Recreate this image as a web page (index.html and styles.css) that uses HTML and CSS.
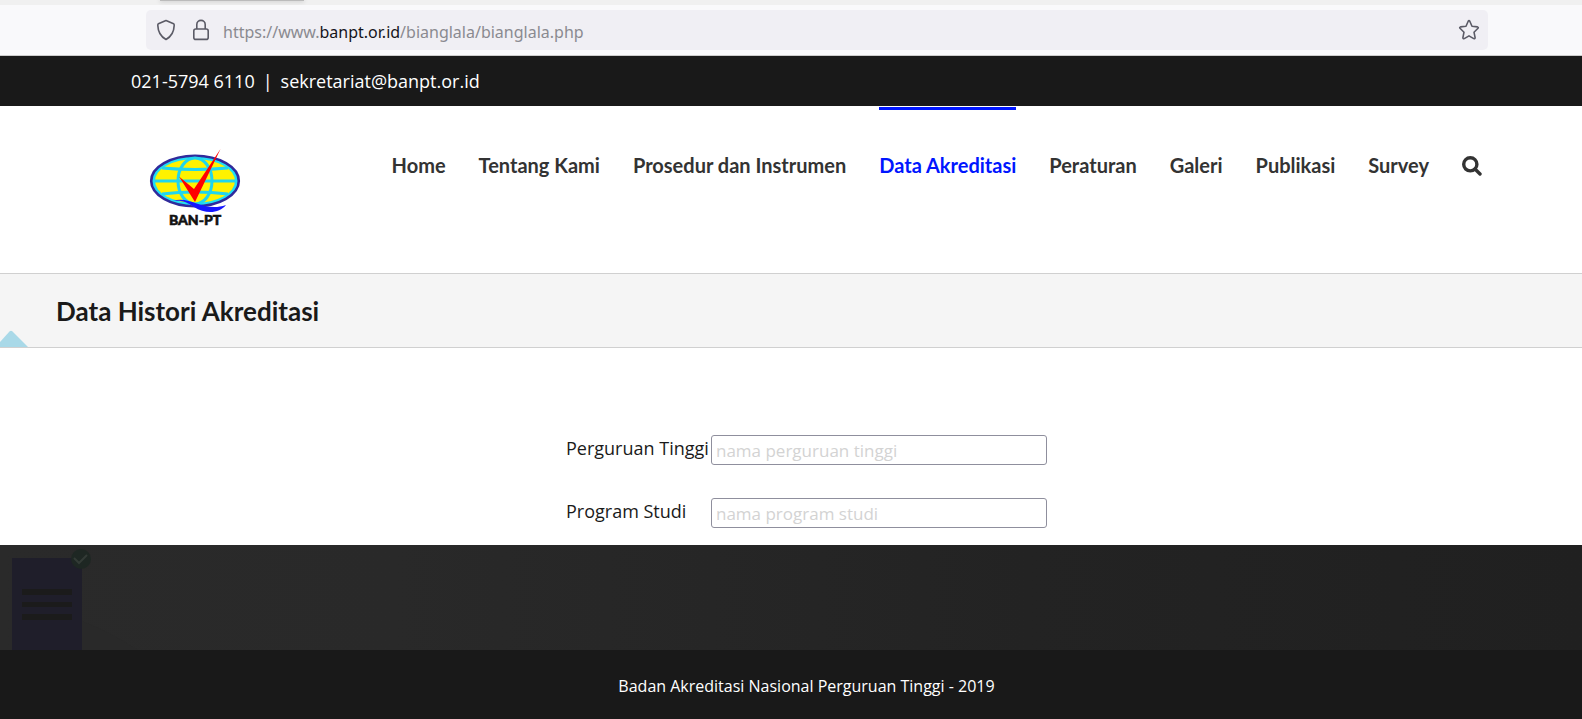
FILE: index.html
```html
<!DOCTYPE html>
<html lang="id">
<head>
<meta charset="utf-8">
<title>Data Histori Akreditasi</title>
<link rel="stylesheet" href="styles.css">
</head>
<body>
<div class="browser">
  <div class="tabs"><div class="tab"></div></div>
  <div class="toolbar">
    <div class="urlbar">
      <svg class="shield" width="20" height="22" viewBox="0 0 20 22" aria-hidden="true"><path d="M10 1.500 17.600 4.800Q18.300 5.200 18.200 6.400C18 12.500 15.500 17.500 10 20.500C4.500 17.500 2 12.500 1.800 6.400Q1.700 5.200 2.400 4.800Z"/></svg>
      <svg class="lock" width="18" height="22" viewBox="0 0 18 22" aria-hidden="true"><rect x="1.800" y="10" width="14.400" height="10.400" rx="2"/><path d="M4.800 10V5.600a4.200 4.200 0 0 1 8.400 0V10"/></svg>
      <span class="url">https://www.<b>banpt.or.id</b>/bianglala/bianglala.php</span>
      <button class="star" type="button" aria-label="Bookmark"><svg width="22" height="22" viewBox="0 0 22 22" aria-hidden="true"><path d="M10.200 2.200Q11 1 11.800 2.200L14 7.200 19.500 7.900Q20.800 8.300 20 9.300L16 13.200 17.100 18.600Q17 20 15.700 19.600L11 16.900 6.300 19.600Q5 20 4.900 18.600L6 13.200 2 9.300Q1.200 8.300 2.500 7.900L8 7.200Z"/></svg></button>
    </div>
  </div>
</div>
<div class="contact"><span>021-5794 6110</span><span>|</span><span>sekretariat@banpt.or.id</span></div>
<header class="header">
  <a class="logo" href="#" aria-label="BAN-PT">
    <svg width="92" height="80" viewBox="0 0 92 80">
      <ellipse cx="46" cy="33" rx="43.800" ry="25.200" fill="#20dff5" stroke="#302a9b" stroke-width="2.600"/>
      <ellipse cx="46" cy="33" rx="40" ry="22" fill="#fff200"/>
      <g fill="none" stroke="#20d5ee" stroke-width="3"><ellipse cx="46" cy="33" rx="17" ry="23"/><path d="M13 20Q46 23 79 20M6 33H86M13 46Q46 42 79 46"/></g>
      <path d="M30 28.500 45 41 71.500 1 46 54Z" fill="#f00"/>
      <path d="M24 53C41 47 55 65 77 57C70 66 56 66 45 59C39 55 34 52 24 53Z" fill="#1616ff"/>
      <text x="46" y="77" text-anchor="middle" class="logo-text">BAN-PT</text>
    </svg>
  </a>
  <nav class="nav">
    <a href="#">Home</a>
    <a href="#">Tentang Kami</a>
    <a href="#">Prosedur dan Instrumen</a>
    <a href="#" class="active">Data Akreditasi</a>
    <a href="#">Peraturan</a>
    <a href="#">Galeri</a>
    <a href="#">Publikasi</a>
    <a href="#">Survey</a>
    <button class="search" type="button" aria-label="Cari"><svg width="20" height="20" viewBox="0 0 20 20" aria-hidden="true"><circle cx="8.300" cy="8.300" r="6.600"/><path d="m13 13 5 5"/></svg></button>
  </nav>
</header>
<section class="titlebar">
  <svg class="triangle" width="28" height="17" viewBox="0 0 28 17" aria-hidden="true"><path d="M0 12 9.500 1.500Q11 0 12.500 1.500L28 17H0Z"/></svg>
  <h1>Data Histori Akreditasi</h1>
</section>
<main class="main">
  <form class="form">
    <label for="pt">Perguruan Tinggi</label>
    <input id="pt" type="text" placeholder="nama perguruan tinggi">
    <label for="ps">Program Studi</label>
    <input id="ps" type="text" placeholder="nama program studi">
  </form>
</main>
<div class="band">
  <svg width="140" height="105" viewBox="0 0 140 105" aria-hidden="true">
    <path d="M82 31V105H138Q110 87 82 76Z" fill="#292929"/>
    <path d="M12 13H82V105H12Z" fill="#1f1e2a"/>
    <path d="M22 44H72V50H22ZM22 57H72V62H22ZM22 69H72V75H22Z" fill="#1b1b1b"/>
    <circle cx="81" cy="14" r="10" fill="#1e2723"/>
    <path d="m74 13 5 5 8-8" fill="none" stroke="#333b36" stroke-width="2"/>
  </svg>
</div>
<footer class="footer">Badan Akreditasi Nasional Perguruan Tinggi - 2019</footer>
</body>
</html>
```
FILE: styles.css
```css
* { box-sizing: border-box; }
body {
  margin: 0;
  min-height: 100vh;
  display: flex;
  flex-direction: column;
  background: #fff;
  color: #1a1a1a;
  font: 18px/26px "Open Sans", sans-serif;
}
button { padding: 0; border: 0; background: none; display: flex; }
a { color: inherit; text-decoration: none; }

.tabs { height: 5px; padding-left: 160px; background: #f0f0f0; overflow: hidden; }
.tab { width: 144px; height: 1px; background: #bbb; box-shadow: 0 0 4px #888; }
.toolbar { padding: 5px 94px 5px 146px; background: #f9f9fb; border-bottom: 1px solid #ccc; }
.urlbar {
  display: flex;
  align-items: center;
  height: 40px;
  padding: 0 8px 0 10px;
  border-radius: 5px;
  background: #f0eff4;
  color: #8a8a90;
  font: 16px/24px "Noto Sans", sans-serif;
}
.urlbar svg { fill: none; stroke: #5b5b66; stroke-width: 1.6; stroke-linejoin: round; }
.lock { margin: 0 13px 0 16px; }
.url { padding-top: 3px; }
.url b { color: #15141a; font-weight: 400; }
.star { margin-left: auto; }

.contact { display: flex; gap: 8px; padding: 12px 131px; background: #191919; color: #fff; }

.header { display: flex; justify-content: space-between; height: 167px; padding: 1px 100px 0 149px; }
.logo { margin-top: 41px; }
.logo-text { font: 900 14px Lato, sans-serif; fill: #111; stroke: #111; stroke-width: 0.6; }
.nav {
  display: flex;
  align-items: flex-start;
  gap: 33px;
  color: #333;
  font: 700 20px/28px Lato, sans-serif;
}
.nav a { padding-top: 41px; border-top: 3px solid transparent; white-space: nowrap; }
.nav .active { color: #0016ff; border-top-color: #0016ff; }
.search { margin-top: 49px; }
.search svg { fill: none; stroke: #333; stroke-width: 3.4; stroke-linecap: round; }

.titlebar {
  position: relative;
  padding: 21px 56px 20px;
  border: solid #d0d0d0;
  border-width: 1px 0;
  background: #f5f5f5;
}
.titlebar h1 { margin: 0; font: 700 26px/32px Lato, sans-serif; }
.triangle { position: absolute; left: 0; bottom: 0; fill: #a9d9e8; }

.main { padding: 87px 0 17px 31px; display: flex; justify-content: center; }
.form {
  display: grid;
  grid-template-columns: 145px 336px;
  row-gap: 33px;
}
.form input {
  height: 30px;
  padding: 0 4px;
  border: 1px solid #8f8f9d;
  border-radius: 3px;
  background: #fff;
  color: #1a1a1a;
  font: 17px/24px "Open Sans", sans-serif;
}
.form input::placeholder { color: #d3d3d3; opacity: 1; }

.band { height: 105px; background: linear-gradient(90deg, #2a2a2a, #292929 25%, #232323 65%, #202020); }
.band svg { display: block; }
.footer {
  flex: 1;
  padding: 23px 0 20px 31px;
  background: #191919;
  color: #fff;
  text-align: center;
  font-size: 16px;
}
```
